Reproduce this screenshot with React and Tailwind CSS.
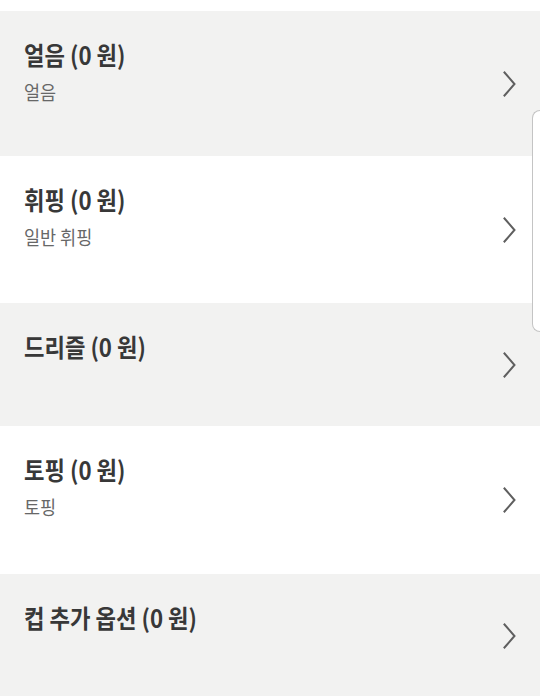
import React from "react";

const rows = [
  { title: "얼음 (0 원)", sub: "얼음", bg: "bg-[#f2f2f1]", h: "h-[145px]" },
  { title: "휘핑 (0 원)", sub: "일반 휘핑", bg: "bg-white", h: "h-[147px]" },
  { title: "드리즐 (0 원)", sub: null, bg: "bg-[#f2f2f1]", h: "h-[123px]" },
  { title: "토핑 (0 원)", sub: "토핑", bg: "bg-white", h: "h-[148px]" },
  { title: "컵 추가 옵션 (0 원)", sub: null, bg: "bg-[#f2f2f1]", h: "h-[123px]" },
];

function Chevron() {
  return (
    <svg width="13" height="26" viewBox="0 0 13 26" fill="none" className="shrink-0">
      <polyline points="1.5,1.5 11.5,13 1.5,24.5" stroke="#5f5f5f" strokeWidth="2" strokeLinecap="square" strokeLinejoin="miter" />
    </svg>
  );
}

export default function App() {
  return (
    <div
      className="relative w-[540px] h-[696px] overflow-hidden bg-white"
      style={{ fontFamily: '"Noto Sans CJK KR", "Noto Sans", sans-serif' }}
    >
      <div className="h-[11px] bg-white" />
      {rows.map((r, i) => (
        <div key={i} className={`${r.bg} ${r.h} flex items-center justify-between pl-6 pr-[24px]`}>
          <div className="self-start pt-[27px]">
            <div className="origin-left scale-x-[0.89] text-[25px] leading-[32px] font-bold text-[#383838] whitespace-nowrap">
              {r.title}
            </div>
            {r.sub && (
              <div className="mt-[10px] origin-left scale-x-[0.92] text-[19px] leading-[24px] text-[#676767] whitespace-nowrap">
                {r.sub}
              </div>
            )}
          </div>
          <Chevron />
        </div>
      ))}
      <div className="bg-[#f2f2f1] h-[40px]" />
      <div className="absolute right-0 top-[110px] w-[8px] h-[222px] rounded-l-[9px] border border-r-0 border-[#c4c4c4] bg-white" />
    </div>
  );
}
